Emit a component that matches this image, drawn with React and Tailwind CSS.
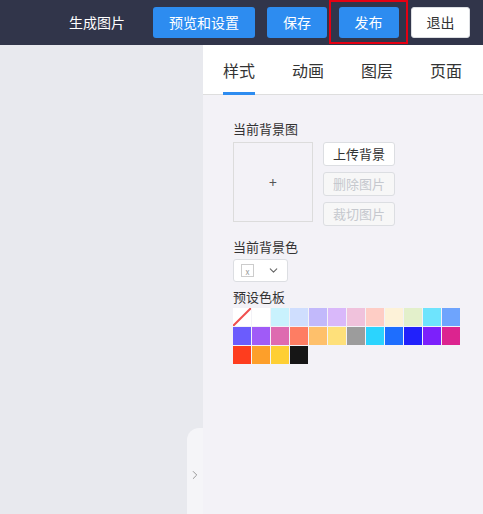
import { ChevronDown, ChevronRight } from "lucide-react";

const swatches = [
  "none", "#ffffff", "#c9f2fd", "#cfdefe", "#c2b9fb", "#d9b8fa", "#f0c2dc", "#fecdc5", "#fdf2d8", "#e3f0cb", "#6ee4fd", "#6ea4fd",
  "#6b5cfd", "#a05bf7", "#de6bb0", "#fe7d63", "#fec06b", "#fee07a", "#9c9c9c", "#2bd4fe", "#1e6efe", "#2121fb", "#7c20fb", "#dc248f",
  "#fe3d1e", "#fd9f2a", "#fecf34", "#161616",
];

function Swatch({ color }) {
  if (color === "none") {
    return (
      <div className="w-[18px] h-[18px] bg-white">
        <svg width="18" height="18" viewBox="0 0 18 18">
          <line x1="0" y1="18" x2="18" y2="0" stroke="#f0504f" strokeWidth="2" />
        </svg>
      </div>
    );
  }
  return <div className="w-[18px] h-[18px]" style={{ background: color }} />;
}

export default function App() {
  return (
    <div className="w-[483px] h-[514px] overflow-hidden flex flex-col" style={{ fontFamily: '"Noto Sans CJK SC", "Noto Sans", sans-serif' }}>
      {/* header */}
      <div className="h-[45px] bg-[#31354a] flex items-center shrink-0">
        <div className="ml-[69px] text-white text-[14px]">生成图片</div>
        <button className="ml-[28px] w-[102px] h-[31px] rounded-[3px] bg-[#2d8cf0] text-white text-[14px]">预览和设置</button>
        <button className="ml-[12px] w-[60px] h-[31px] rounded-[3px] bg-[#2d8cf0] text-white text-[14px]">保存</button>
        <div className="ml-[2px] w-[79px] h-[44px] self-start border-2 border-[#e60012] flex items-center justify-center">
          <button className="w-[60px] h-[31px] rounded-[3px] bg-[#2d8cf0] text-white text-[14px]">发布</button>
        </div>
        <button className="ml-[3px] w-[59px] h-[31px] rounded-[3px] bg-white text-[#333] text-[14px] border border-[#dcdee2]">退出</button>
      </div>

      <div className="flex flex-1 relative">
        <div className="flex-1 bg-[#e8e9ee]" />
        <div className="absolute left-[187px] top-[383px] w-[16px] h-[100px] bg-[#f5f5f8] rounded-l-[12px] flex items-center justify-center">
          <ChevronRight size={14} strokeWidth={1.5} className="text-[#8a8a8a] -mt-[6px]" />
        </div>
        <div className="w-[280px] bg-[#f3f2f7] flex flex-col">
          <div className="h-[50px] bg-white border-b border-[#dedede] flex items-stretch pl-[20px] gap-[37px] text-[16px] text-[#333]">
            <div className="relative flex items-center">
              样式
              <div className="absolute left-0 right-0 bottom-[-1px] h-[3px] bg-[#2d8cf0]" />
            </div>
            <div className="flex items-center">动画</div>
            <div className="flex items-center">图层</div>
            <div className="flex items-center">页面</div>
          </div>

          <div className="pl-[30px] pt-[25px] text-[13px] text-[#333]">
            <div className="leading-[18px]">当前背景图</div>
            <div className="flex mt-[4px] gap-[10px]">
              <div className="w-[80px] h-[80px] border border-[#dcdcdc] flex items-center justify-center text-[#555] text-[14px]">+</div>
              <div className="flex flex-col gap-[6px]">
                <button className="w-[72px] h-[24px] bg-white border border-[#dcdee2] rounded-[3px] text-[13px] text-[#333]">上传背景</button>
                <button className="w-[72px] h-[24px] bg-[#f7f7f7] border border-[#dcdee2] rounded-[3px] text-[13px] text-[#c5c8ce]">删除图片</button>
                <button className="w-[72px] h-[24px] bg-[#f7f7f7] border border-[#dcdee2] rounded-[3px] text-[13px] text-[#c5c8ce]">裁切图片</button>
              </div>
            </div>
            <div className="mt-[12px] leading-[18px]">当前背景色</div>
            <div className="mt-[3px] w-[55px] h-[23px] bg-white border border-[#dcdee2] rounded-[3px] flex items-center px-[7px] justify-between">
              <div className="w-[13px] h-[13px] border border-[#ccc] flex items-end justify-center text-[8px] leading-[8px] text-[#999]">x</div>
              <ChevronDown size={13} className="text-[#666]" />
            </div>
            <div className="mt-[6px] leading-[18px]">预设色板</div>
            <div className="mt-[2px] grid grid-cols-[repeat(12,18px)] gap-[1px]">
              {swatches.map((c, i) => (
                <Swatch key={i} color={c} />
              ))}
            </div>
          </div>
        </div>
      </div>
    </div>
  );
}
